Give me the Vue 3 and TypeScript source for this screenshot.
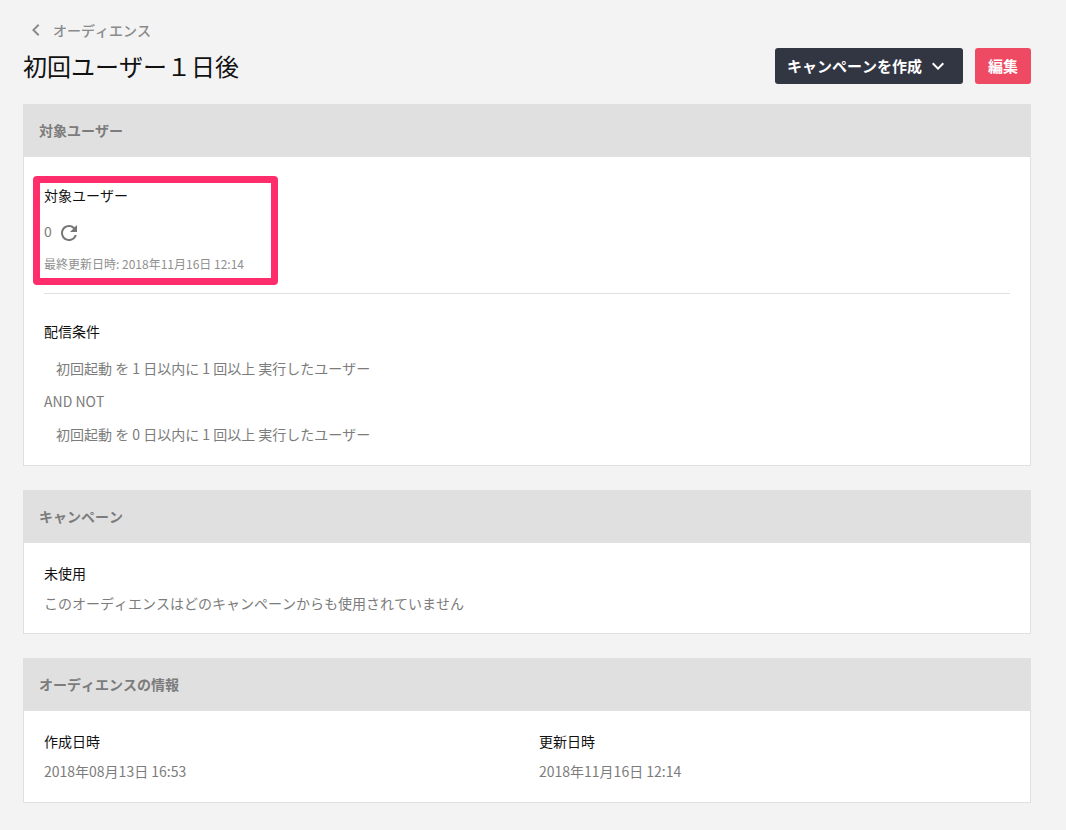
<script setup lang="ts">
interface InfoItem {
  label: string
  value: string
}

const userCount = 0
const updatedAt = '2018年11月16日 12:14'

const conditions: string[] = [
  '初回起動 を 1 日以内に 1 回以上 実行したユーザー',
  '初回起動 を 0 日以内に 1 回以上 実行したユーザー',
]

const info: InfoItem[] = [
  { label: '作成日時', value: '2018年08月13日 16:53' },
  { label: '更新日時', value: updatedAt },
]
</script>

<template>
  <main class="page">
    <nav>
      <a class="back" href="#">
        <svg class="icon" viewBox="0 0 24 24" aria-hidden="true">
          <path d="M16.4 16.59L11.82 12l4.58-4.59L15 6l-6 6 6 6z" />
        </svg>
        <span>オーディエンス</span>
      </a>
    </nav>

    <header class="page-header">
      <h1>初回ユーザー１日後</h1>
      <div class="actions">
        <button type="button" class="btn dark">
          キャンペーンを作成
          <svg class="icon" viewBox="0 0 24 24" aria-hidden="true">
            <path d="M16.59 8.59L12 13.17 7.41 8.59 6 10l6 6 6-6z" />
          </svg>
        </button>
        <button type="button" class="btn red">編集</button>
      </div>
    </header>

    <section class="card">
      <h2>対象ユーザー</h2>
      <div class="body target">
        <div class="users">
          <h3>対象ユーザー</h3>
          <div class="count">
            <span>{{ userCount }}</span>
            <button type="button" class="refresh" aria-label="更新">
              <svg class="icon" viewBox="0 0 24 24" aria-hidden="true">
                <path d="M17.65 6.35A7.958 7.958 0 0 0 12 4c-4.42 0-7.99 3.58-7.99 8s3.57 8 7.99 8c3.73 0 6.84-2.55 7.73-6h-2.08A5.99 5.99 0 0 1 12 18c-3.31 0-6-2.69-6-6s2.69-6 6-6c1.66 0 3.14.69 4.22 1.78L13 11h7V4l-2.35 2.35z" />
              </svg>
            </button>
          </div>
          <p class="updated">最終更新日時: {{ updatedAt }}</p>
          <div class="highlight"></div>
        </div>
        <hr />
        <h3>配信条件</h3>
        <div class="conditions">
          <p class="condition">{{ conditions[0] }}</p>
          <p>AND NOT</p>
          <p class="condition">{{ conditions[1] }}</p>
        </div>
      </div>
    </section>

    <section class="card">
      <h2>キャンペーン</h2>
      <div class="body">
        <h3>未使用</h3>
        <p class="value">このオーディエンスはどのキャンペーンからも使用されていません</p>
      </div>
    </section>

    <section class="card">
      <h2>オーディエンスの情報</h2>
      <div class="body columns">
        <div v-for="item in info" :key="item.label">
          <h3>{{ item.label }}</h3>
          <p class="value">{{ item.value }}</p>
        </div>
      </div>
    </section>
  </main>
</template>

<style>
body {
  margin: 0;
  background: #f3f3f3;
}
</style>

<style scoped>
.page {
  padding: 18px 35px 27px 23px;
  color: #7c7c7c;
  font-family: "Noto Sans CJK JP", sans-serif;
  font-size: 14px;
  font-kerning: none;
  line-height: 20px;
}

h1,
h2,
h3,
p {
  margin: 0;
}

.icon {
  flex: none;
  width: 24px;
  height: 24px;
  fill: currentColor;
}

.back {
  display: inline-flex;
  align-items: center;
  gap: 6px;
  height: 24px;
  color: #8a8a8a;
  font-weight: 500;
  text-decoration: none;
}

nav {
  display: flex;
}

.page-header {
  display: flex;
  align-items: center;
  justify-content: space-between;
  margin: 6px 0 20px;
}

h1 {
  color: #111;
  font-size: 24px;
  font-weight: 400;
  line-height: 36px;
}

.actions {
  display: flex;
  gap: 12px;
}

.btn {
  display: flex;
  align-items: center;
  gap: 4px;
  height: 36px;
  padding: 0 13px;
  border: 0;
  border-radius: 3px;
  color: #fff;
  font: inherit;
  font-size: 15px;
  font-kerning: none;
  font-weight: 700;
}

.dark {
  padding-left: 12px;
  background: #323643;
}

.red {
  background: #ee4a64;
}

.card {
  border: 1px solid #e0e0e0;
  background: #fff;
}

.card + .card {
  margin-top: 24px;
}

h2 {
  padding: 15px 15px 17px;
  background: #e0e0e0;
  font-size: 14px;
  font-weight: 700;
  line-height: 20px;
}

h3 {
  color: #111;
  font-size: 14px;
  font-weight: 400;
}

.body {
  padding: 20px;
}

.target {
  padding-top: 28px;
  padding-bottom: 21px;
}

.users {
  position: relative;
}

.count {
  display: flex;
  gap: 5px;
  margin-top: 16px;
}

.refresh {
  display: flex;
  padding: 0;
  border: 0;
  background: none;
  color: #757575;
}

.updated {
  margin-top: 10px;
  color: #8f8f8f;
  font-size: 12px;
  line-height: 18px;
}

.highlight {
  position: absolute;
  top: -9px;
  left: -11px;
  box-sizing: border-box;
  width: 245px;
  height: 109px;
  border: 7px solid #ff2d6b;
  border-radius: 4px;
  pointer-events: none;
}

hr {
  height: 1px;
  margin: 20px 0 27px;
  border: 0;
  background: #e0e0e0;
}

.conditions {
  display: grid;
  gap: 13px;
  margin-top: 17px;
}

.condition {
  padding-left: 12px;
}

.value {
  margin-top: 10px;
}

.columns {
  display: grid;
  grid-template-columns: 1fr 1fr;
  gap: 24px;
  padding-bottom: 21px;
}
</style>
